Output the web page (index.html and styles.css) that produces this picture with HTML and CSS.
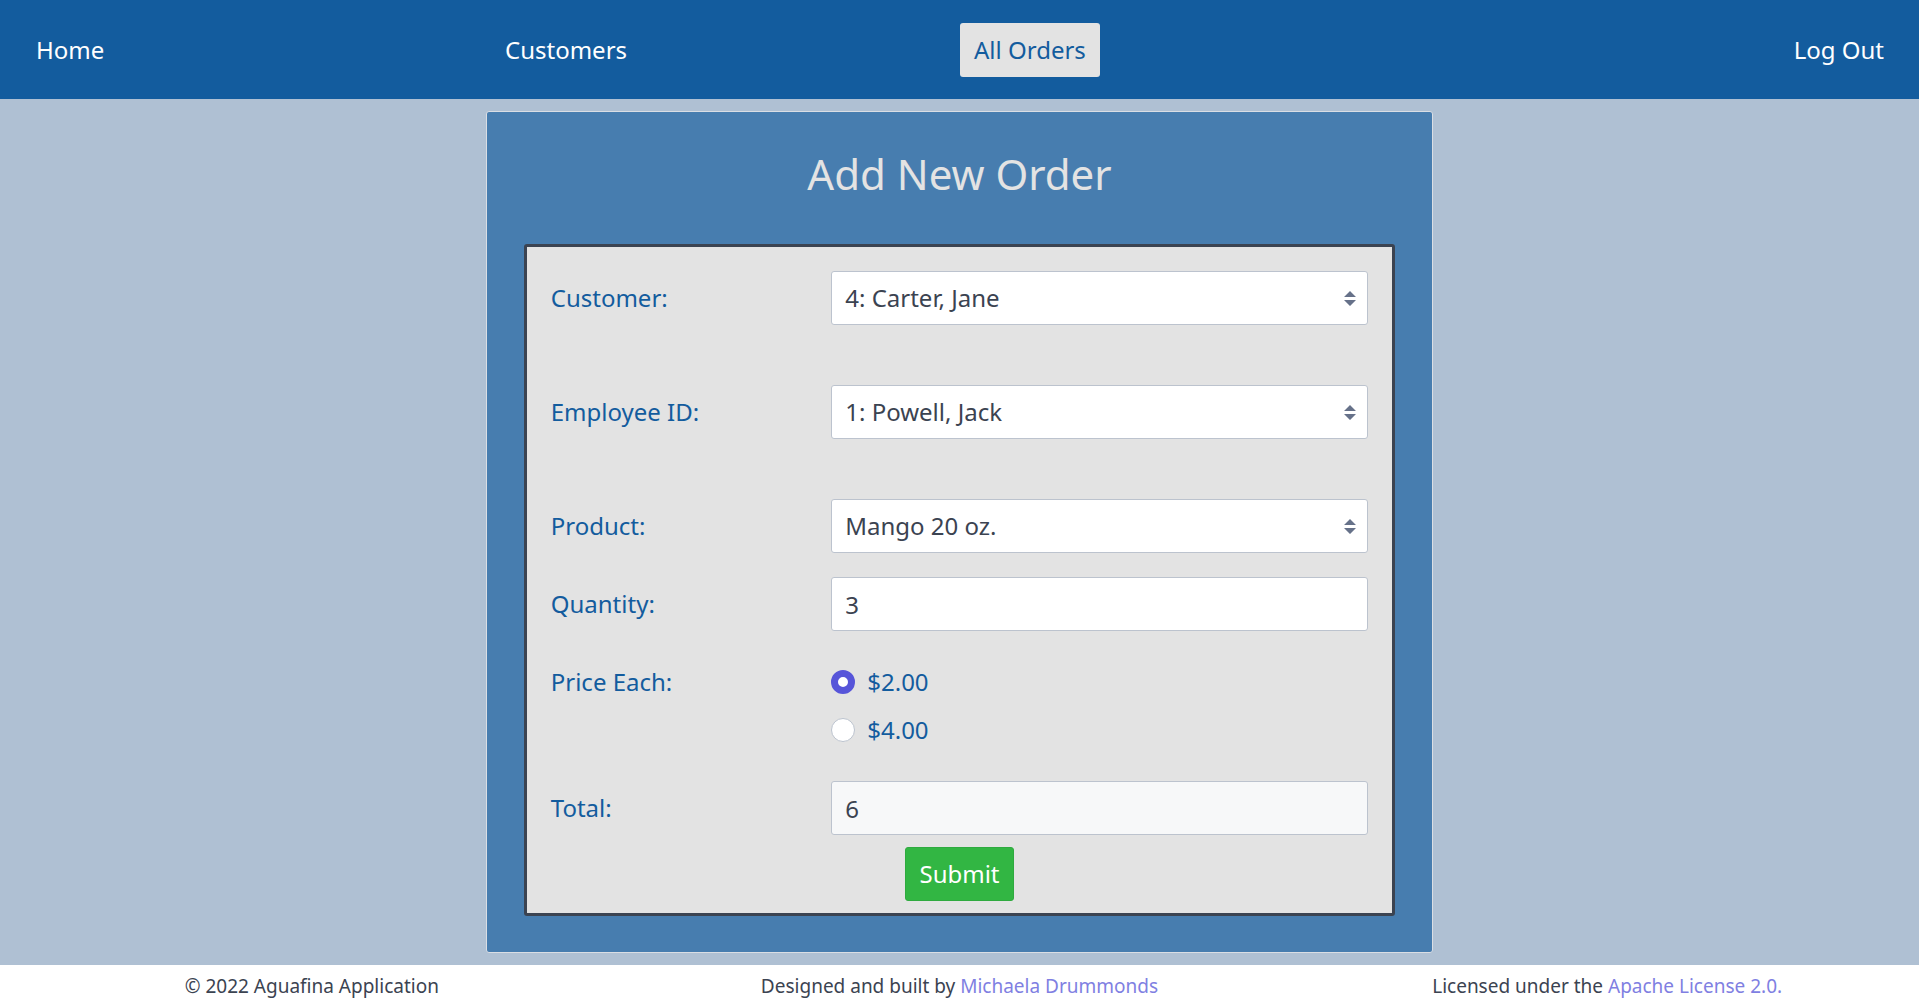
FILE: index.html
```html
<!DOCTYPE html>
<html lang="en">
<head>
<meta charset="utf-8">
<meta name="viewport" content="width=device-width, initial-scale=1">
<title>Aguafina - Add New Order</title>
<link rel="stylesheet" href="styles.css">
</head>
<body>
<header>
  <nav class="navbar">
    <div class="navbar-section"><a class="nav-link" href="#">Home</a></div>
    <div class="navbar-section"><a class="nav-link" href="#">Customers</a></div>
    <div class="navbar-section"><a class="nav-link active" href="#" aria-current="page">All Orders</a></div>
    <div class="navbar-section navbar-end"><a class="nav-link" href="#">Log Out</a></div>
  </nav>
</header>
<main class="content">
  <section class="card">
    <h1 class="card-title">Add New Order</h1>
    <form class="order-form">
      <div class="form-group spaced">
        <label class="form-label" for="customer">Customer:</label>
        <div class="form-field">
          <select class="form-control form-select" id="customer"><option>4: Carter, Jane</option></select>
        </div>
      </div>
      <div class="form-group spaced">
        <label class="form-label" for="employee">Employee ID:</label>
        <div class="form-field">
          <select class="form-control form-select" id="employee"><option>1: Powell, Jack</option></select>
        </div>
      </div>
      <div class="form-group">
        <label class="form-label" for="product">Product:</label>
        <div class="form-field">
          <select class="form-control form-select" id="product"><option>Mango 20 oz.</option></select>
        </div>
      </div>
      <div class="form-group">
        <label class="form-label" for="quantity">Quantity:</label>
        <div class="form-field"><input class="form-control" id="quantity" type="text" inputmode="numeric" value="3"></div>
      </div>
      <div class="form-group" role="radiogroup" aria-labelledby="price-label">
        <span class="form-label" id="price-label">Price Each:</span>
        <div class="form-field radio-list">
          <label class="radio"><input type="radio" name="price" checked>$2.00</label>
          <label class="radio"><input type="radio" name="price">$4.00</label>
        </div>
      </div>
      <div class="form-group">
        <label class="form-label" for="total">Total:</label>
        <div class="form-field"><input class="form-control" id="total" type="text" value="6" readonly></div>
      </div>
      <button class="submit" type="submit">Submit</button>
    </form>
  </section>
</main>
<footer class="footer">
  <div>© 2022 Aguafina Application</div>
  <div>Designed and built by <a href="#">Michaela Drummonds</a></div>
  <div>Licensed under the <a href="#">Apache License 2.0.</a></div>
</footer>
</body>
</html>
```
FILE: styles.css
```css
* {
  box-sizing: border-box;
}

body {
  margin: 0;
  overflow-x: hidden;
  background: #fff;
  color: #3b4351;
  font: 24px/36px "Noto Sans", sans-serif;
}

a {
  color: #807fe2;
  text-decoration: none;
}

.navbar {
  display: flex;
  padding: 23px 21px 22px 22px;
  background: #135c9e;
}

.navbar-section {
  display: flex;
  flex: 1;
}

.navbar-end {
  justify-content: flex-end;
}

.nav-link {
  padding: 8px 13px;
  border: 1px solid transparent;
  border-radius: 3px;
  color: #fff;
}

.nav-link.active {
  background: #e3e3e3;
  color: #135c9e;
}

.content {
  padding: 12px;
  background: #afc0d3;
}

.card {
  width: 50%;
  margin: 0 auto;
  padding: 36px 37px;
  border: 1px solid #dadee4;
  border-radius: 3px;
  background: #477daf;
}

.card-title {
  margin: 0 0 44px;
  color: #e3e3e3;
  font-size: 42px;
  font-weight: 400;
  line-height: 52px;
  text-align: center;
}

.order-form {
  display: flex;
  flex-direction: column;
  padding: 24px 12px 12px;
  border: 3px solid #3b4351;
  border-radius: 3px;
  background: #e3e3e3;
  color: #135c9e;
}

.form-group {
  display: grid;
  grid-template-columns: 1fr 2fr;
  align-items: start;
  margin-bottom: 24px;
}

.form-group.spaced {
  margin-bottom: 60px;
}

.form-label {
  padding: 9px 12px;
}

.form-field {
  padding: 0 12px;
}

.form-control {
  display: block;
  width: 100%;
  height: 54px;
  padding: 8px 13px;
  border: 1px solid #bcc3ce;
  border-radius: 3px;
  background-color: #fff;
  color: #3b4351;
  font: inherit;
}

.form-control:read-only:not(select) {
  background-color: #f7f8f9;
}

.form-select {
  appearance: none;
  background-image: url("data:image/svg+xml,%3Csvg xmlns='http://www.w3.org/2000/svg' viewBox='0 0 4 5'%3E%3Cpath fill='%23667189' d='M2 0L0 2h4zm0 5L0 3h4z'/%3E%3C/svg%3E");
  background-position: right 11px center;
  background-repeat: no-repeat;
  background-size: 12px 15px;
}

.radio-list {
  padding-top: 3px;
  padding-bottom: 3px;
}

.radio {
  display: flex;
  align-items: center;
  gap: 12px;
  height: 48px;
}

.radio input {
  appearance: none;
  width: 24px;
  height: 24px;
  margin: 0;
  border: 1px solid #bcc3ce;
  border-radius: 50%;
  background: #fff;
}

.radio input:checked {
  border: 7px solid #5755d9;
}

.submit {
  align-self: center;
  height: 54px;
  margin-top: -12px;
  padding: 0 13px;
  border: 1px solid #2faa3f;
  border-radius: 3px;
  background: #32b643;
  color: #fff;
  font: inherit;
}

.footer {
  display: grid;
  grid-template-columns: repeat(3, 1fr);
  margin: 0 -12px;
  padding-top: 6px;
  font-size: 19px;
  line-height: 30px;
  text-align: center;
}
```
